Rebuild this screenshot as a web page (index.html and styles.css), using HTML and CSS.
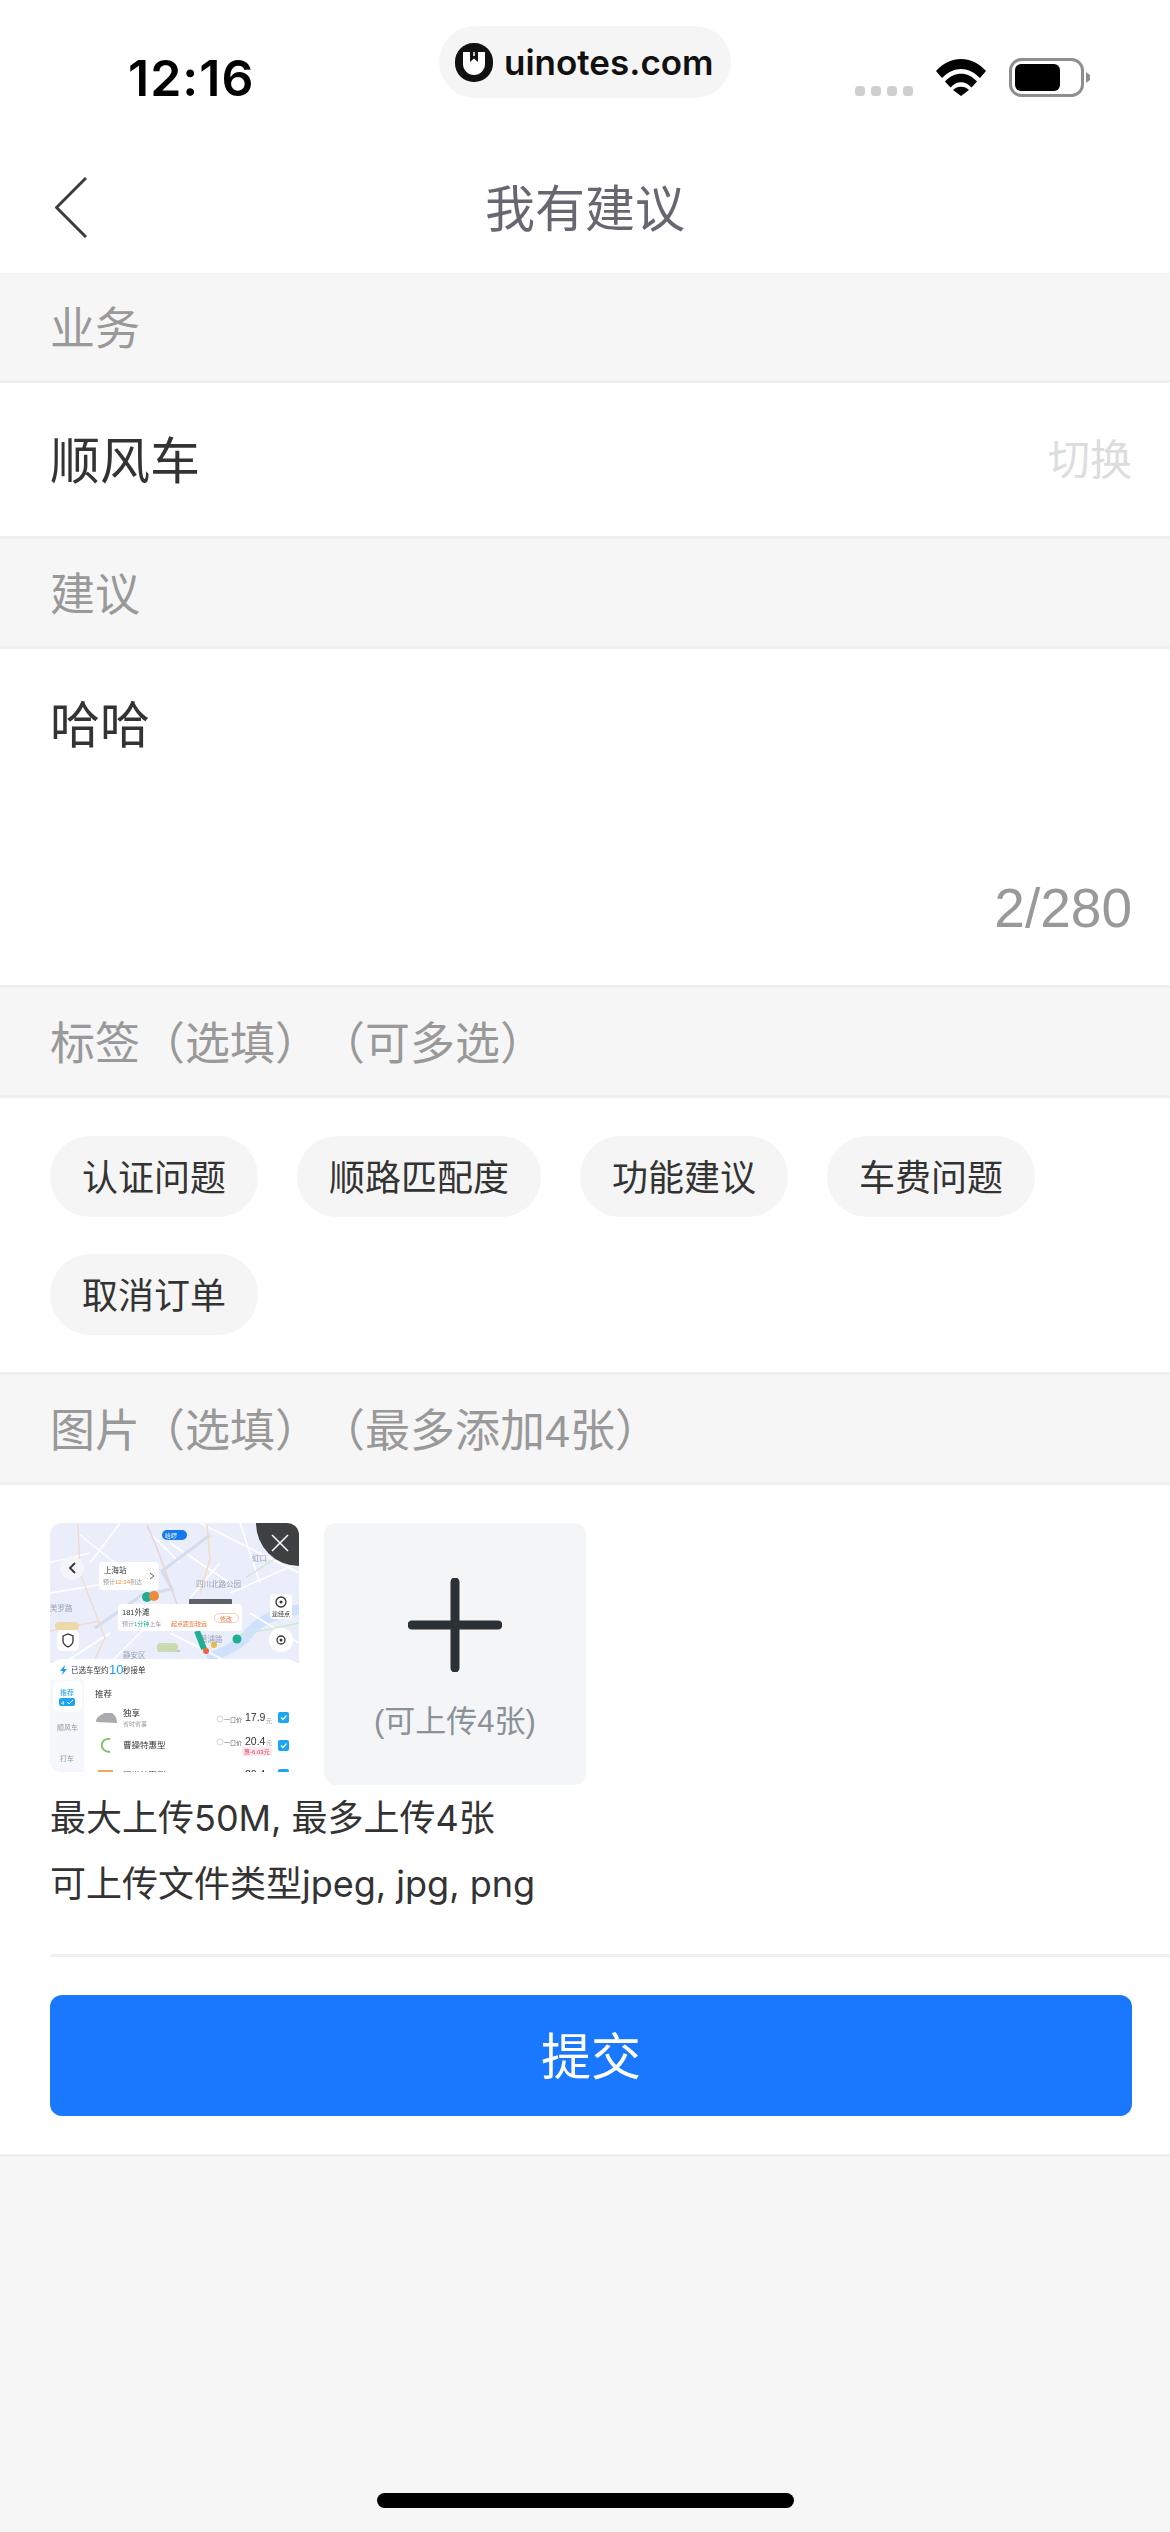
FILE: index.html
```html
<!DOCTYPE html>
<html lang="zh-CN">
<head>
    <meta charset="UTF-8">
    <meta name="viewport" content="width=device-width, initial-scale=1.0">
    <title>我有建议</title>
    <link rel="stylesheet" href="styles.css">
</head>
<body>
    <div id="page">
        <!-- Status bar -->
        <div class="status-bar">
            <span class="time">12:16</span>
            <div class="status-icons">
                <svg class="dots" width="58" height="10" viewBox="0 0 58 10">
                    <rect x="0" width="10" height="10" rx="3.5" fill="#cfcfcf"/>
                    <rect x="16" width="10" height="10" rx="3.5" fill="#cfcfcf"/>
                    <rect x="32" width="10" height="10" rx="3.5" fill="#cfcfcf"/>
                    <rect x="48" width="10" height="10" rx="3.5" fill="#cfcfcf"/>
                </svg>
                <svg class="wifi" width="50" height="37" viewBox="0 0 50 37">
                    <path d="M0 12C14-4 36-4 50 12L44 19C32 7 18 7 6 19Z"/>
                    <path d="M9 22.500C18 12 32 12 41 22.500L35.500 28.500C29 21.500 21 21.500 14.500 28.500Z"/>
                    <path d="M17 31C21 26.500 29 26.500 33 31L25 37Z"/>
                </svg>
                <svg class="battery" width="81" height="39" viewBox="0 0 81 39">
                    <rect x="1.500" y="1.500" width="72" height="36" rx="11" fill="none" stroke="#8e8e8e" stroke-width="3"/>
                    <rect x="6" y="6" width="45" height="27" rx="6"/>
                    <path d="M77 14L81 17V22L77 25Z" fill="#8e8e8e"/>
                </svg>
            </div>
            <div class="brand">
                <svg width="38" height="39" viewBox="0 0 38 39">
                    <rect width="38" height="39" rx="18.500" fill="#111"/>
                    <path d="M8 9H30V21A11 11 0 0 1 8 21Z" fill="#fff"/>
                    <path d="M15 9V19L19 15.500L23 19V9" fill="#111"/>
                    <path d="M19 9V13" stroke="#fff" stroke-width="1.500"/>
                </svg>
                <span class="brand-name">uinotes.com</span>
            </div>
        </div>

        <!-- Nav -->
        <div class="nav">
            <svg class="back" width="32" height="61" viewBox="0 0 32 61">
                <path d="M31 1L1.500 30.500L31 60" fill="none" stroke="#3d3b35" stroke-width="3"/>
            </svg>
            <h1 class="nav-title">我有建议</h1>
        </div>

        <div class="sec-head first">业务</div>
        <div class="biz-row">
            <span class="biz-name">顺风车</span>
            <span class="biz-switch">切换</span>
        </div>

        <div class="sec-head">建议</div>
        <div class="advice">
            <div class="advice-text">哈哈</div>
            <div class="advice-count">2/280</div>
        </div>

        <div class="sec-head">标签（选填）（可多选）</div>
        <div class="tags">
            <span class="tag">认证问题</span>
            <span class="tag">顺路匹配度</span>
            <span class="tag">功能建议</span>
            <span class="tag">车费问题</span>
            <span class="tag">取消订单</span>
        </div>

        <div class="sec-head">图片（选填）（最多添加4张）</div>
        <div class="upload">
            <div class="photos">
                <div class="thumb">
                    <svg class="shot" width="249" height="249" viewBox="0 0 249 249">
                        <!-- map -->
                        <rect width="249" height="140" fill="#e9eefa"/>
                        <g fill="none">
                            <path d="M252 86C222 90 205 100 195 115C185 125 170 130 158 136" stroke="#d0e2fb" stroke-width="10"/>
                            <path d="M-2 40L40 30M30 12L90 60M70 0L40 40M120 20L180 60M150 0L249 50M190 0L210 60M180 70L249 40M100 100L60 140M120 110L180 140M0 70L60 60M60 110L20 136M200 90L249 120M130 40L100 10M170 40L140 75" stroke="#fff" stroke-width="1.600"/>
                            <path d="M160 12L112 48L122 66L92 72L45 105" stroke="#d5dcec" stroke-width="3"/>
                            <path d="M97 2C108 25 112 40 116 50L128 84" stroke="#e8d3d6" stroke-width="1.600"/>
                            <path d="M157 2L160 36L150 70" stroke="#f0dcc0" stroke-width="1.600"/>
                            <path d="M28 2L30 50L55 115L45 136M0 108L50 98" stroke="#f1d9cf" stroke-width="1.300"/>
                            <path d="M195 55L249 20M190 112L249 100" stroke="#cfe6cf" stroke-width="1.300"/>
                            <path d="M108 128H130" stroke="#c2c9d6" stroke-width="2"/>
                        </g>
                        <rect x="5" y="99" width="24" height="8" rx="4" fill="#eed9a8"/>
                        <rect x="107" y="120" width="21" height="9" rx="4" fill="#c9dcb0"/>
                        <text class="m-label" x="202" y="38">虹口</text>
                        <text class="m-label" x="146" y="64">四川北路公园</text>
                        <text class="m-label" x="73" y="135">静安区</text>
                        <text class="m-label" x="0" y="88">美罗路</text>
                        <text class="m-label" x="150" y="119">黄浦路</text>

                        <rect x="112" y="7" width="25" height="10" rx="5" fill="#1479f0"/>
                        <text class="m-tiny" x="115" y="15" fill="#fff">哈啰</text>

                        <circle cx="22" cy="45" r="12" fill="#f4f5f9"/>
                        <path d="M25 40L20 45L25 50" fill="none" stroke="#333" stroke-width="1.800"/>

                        <circle cx="97" cy="74" r="5" fill="#1fae92"/>
                        <circle cx="104" cy="73" r="5" fill="#ef8b3c"/>
                        <rect x="139" y="76" width="43" height="8" rx="1" fill="#5c6068"/>

                        <rect x="49" y="39" width="60" height="28" rx="3" fill="#fff"/>
                        <text class="m-text" x="54" y="50">上海站</text>
                        <text class="m-tiny gray" x="53" y="61">预计<tspan fill="#ef8b3c">12:34</tspan>到达</text>
                        <path d="M100 50L104 53L100 56" fill="none" stroke="#666"/>

                        <path d="M147 108L154 126" stroke="#1fae92" stroke-width="6" fill="none"/>
                        <circle cx="156" cy="128" r="3" fill="#e8663c"/>
                        <circle cx="164" cy="122" r="3" fill="#e9b949"/>
                        <circle cx="187" cy="116" r="4.500" fill="#1fae92"/>

                        <rect x="68" y="81" width="124" height="27" rx="3" fill="#fff"/>
                        <text class="m-text" x="72" y="92">181外滩</text>
                        <text class="m-tiny gray" x="72" y="103">预计<tspan fill="#1fae92">1分钟</tspan>上车</text>
                        <text class="m-tiny" x="121" y="103" fill="#e8763c">起点距您较远</text>
                        <rect x="164.500" y="90.500" width="24" height="9" rx="4.500" fill="#fff" stroke="#efb898" stroke-width=".7"/>
                        <text class="m-tiny" x="170" y="98" fill="#e8763c">修改</text>

                        <rect x="220" y="71" width="22" height="25" rx="4" fill="#fff"/>
                        <circle cx="231" cy="79" r="5" fill="none" stroke="#333" stroke-width="1.300"/>
                        <circle cx="231" cy="79" r="1.500" fill="#333"/>
                        <text class="m-tiny" x="222" y="93" fill="#333">途经点</text>

                        <circle cx="231" cy="117" r="12" fill="#fff"/>
                        <circle cx="231" cy="117" r="4" fill="none" stroke="#333" stroke-width="1.300"/>
                        <circle cx="231" cy="117" r="1.500" fill="#333"/>

                        <rect x="7" y="107" width="22" height="21" rx="5" fill="#fff"/>
                        <path d="M13 113L18 111L23 113V118C23 121 20 123 18 124C16 123 13 121 13 118Z" fill="none" stroke="#333" stroke-width="1.300"/>

                        <!-- bottom sheet -->
                        <rect y="136" width="249" height="113" rx="12" fill="#fff"/>
                        <path d="M15 142L10 148H13L12 152L17 146H14Z" fill="#1a9cf0"/>
                        <text class="m-text" x="21" y="150">已选车型约</text>
                        <text class="m-ten" x="59" y="151">10</text>
                        <text class="m-text" x="73" y="150">秒接单</text>

                        <rect y="157" width="34" height="92" fill="#f4f7fb"/>
                        <rect x="3" y="158" width="29" height="31" rx="6" fill="#fff"/>
                        <text class="m-tab" x="10" y="172" fill="#1a9cf0">推荐</text>
                        <rect x="9" y="175" width="16" height="8" rx="2" fill="#1aa5f5"/>
                        <text class="m-tiny" x="11" y="182" fill="#fff">4</text>
                        <path d="M17 179L19 181L23 177" fill="none" stroke="#fff"/>
                        <text class="m-tab gray" x="7" y="207">顺风车</text>
                        <text class="m-tab gray" x="10" y="238">打车</text>

                        <text class="m-head" x="45" y="174">推荐</text>

                        <path d="M46 199C46 193 52 192 54 190H62C65 192 67 195 67 200Z" fill="#a9abae"/>
                        <text class="m-head" x="73" y="193">独享</text>
                        <text class="m-tiny gray" x="73" y="203">省时省事</text>
                        <circle cx="170" cy="196" r="3" fill="none" stroke="#bbb" stroke-width=".6"/>
                        <text class="m-tiny" x="174" y="199" fill="#666">一口价</text>
                        <text class="m-price" x="195" y="198">17.9</text>
                        <text class="m-tiny gray" x="216" y="200">元</text>
                        <rect x="228" y="189" width="11" height="11" rx="2" fill="#1aa5f5"/>
                        <path d="M231 194.500L233 196.500L236.500 192.500" fill="none" stroke="#fff" stroke-width="1.200"/>

                        <path d="M60 216C50 214 48 229 60 229" fill="none" stroke="#7cc05a" stroke-width="1.800"/>
                        <text class="m-head" x="73" y="225">曹操特惠型</text>
                        <circle cx="170" cy="219" r="3" fill="none" stroke="#bbb" stroke-width=".6"/>
                        <text class="m-tiny" x="174" y="222" fill="#666">一口价</text>
                        <text class="m-price" x="195" y="222">20.4</text>
                        <text class="m-tiny gray" x="216" y="222">元</text>
                        <rect x="192" y="224" width="30" height="9" rx="1" fill="#fdeaee"/>
                        <text class="m-tiny" x="194" y="231" fill="#e23a5e">惠-6.03元</text>
                        <rect x="228" y="217" width="11" height="11" rx="2" fill="#1aa5f5"/>
                        <path d="M231 222.500L233 224.500L236.500 220.500" fill="none" stroke="#fff" stroke-width="1.200"/>

                        <rect x="48" y="247" width="15" height="4" fill="#f2a65a"/>
                        <text class="m-head" x="73" y="255">阳光特惠型</text>
                        <text class="m-price" x="195" y="255">20.4</text>
                        <rect x="228" y="246" width="11" height="11" rx="2" fill="#1aa5f5"/>
                    </svg>
                    <div class="thumb-close">
                        <svg width="18" height="18" viewBox="0 0 18 18">
                            <path d="M1 1L17 17M17 1L1 17" stroke="#fff" stroke-width="1.500"/>
                        </svg>
                    </div>
                </div>
                <div class="add-box">
                    <svg class="add-plus" width="94" height="94" viewBox="0 0 94 94">
                        <path d="M47 4V90M4 47H90" stroke="#2b3237" stroke-width="9" stroke-linecap="round"/>
                    </svg>
                    <span class="add-text">(可上传4张)</span>
                </div>
            </div>
            <p class="note">最大上传50M, 最多上传4张</p>
            <p class="note">可上传文件类型jpeg, jpg, png</p>
            <div class="divider"></div>
            <button class="submit">提交</button>
        </div>

        <div class="home-area">
            <div class="home-bar"></div>
        </div>
    </div>
</body>
</html>
```

FILE: styles.css
```css
* {
    box-sizing: border-box;
}

body {
    margin: 0;
    padding: 0;
    font-family: "Liberation Sans", "Noto Sans CJK SC", sans-serif;
    background-color: #f6f6f6;
    color: #333;
}

#page {
    width: 1170px;
    height: 2532px;
    display: flex;
    flex-direction: column;
    overflow: hidden;
}

/* Status bar */
.status-bar {
    position: relative;
    height: 143px;
    flex: none;
    display: flex;
    justify-content: space-between;
    align-items: flex-start;
    padding: 58px 80px 0 128px;
    background-color: #fff;
}

.time {
    font-family: Inter, sans-serif;
    font-size: 50px;
    font-weight: 600;
    line-height: 40px;
    letter-spacing: 1px;
    color: #000;
}

.status-icons {
    display: flex;
    align-items: flex-end;
    gap: 23px;
    height: 39px;
}

.dots,
.wifi {
    margin-bottom: 1px;
}

.brand {
    position: absolute;
    left: 439px;
    top: 26px;
    width: 292px;
    height: 72px;
    display: flex;
    align-items: center;
    gap: 11px;
    padding-left: 16px;
    background-color: #f5f5f5;
    border-radius: 36px;
}

.brand-name {
    font-family: Inter, sans-serif;
    font-size: 35px;
    font-weight: 600;
    color: #111;
}

/* Nav */
.nav {
    position: relative;
    height: 130px;
    flex: none;
    display: flex;
    align-items: center;
    justify-content: center;
    background-color: #fff;
}

.back {
    position: absolute;
    left: 55px;
    top: 34px;
}

.nav-title {
    margin: 0 0 6px;
    font-size: 50px;
    font-weight: 400;
    color: #666770;
}

/* Sections */
.sec-head {
    height: 113px;
    flex: none;
    display: flex;
    align-items: center;
    padding: 0 50px 2px;
    font-size: 45px;
    color: #999;
    text-spacing-trim: space-all;
    background-color: #f6f6f6;
    border-top: 3px solid #efefef;
    border-bottom: 3px solid #efefef;
}

.sec-head.first {
    height: 110px;
    border-top: none;
}

.biz-row {
    height: 153px;
    flex: none;
    display: flex;
    align-items: center;
    justify-content: space-between;
    padding: 0 38px 6px 50px;
    background-color: #fff;
}

.biz-name {
    font-size: 50px;
}

.biz-switch {
    font-size: 42px;
    color: #ddd;
}

.advice {
    height: 336px;
    flex: none;
    display: flex;
    flex-direction: column;
    justify-content: space-between;
    padding: 47px 38px 47px 50px;
    background-color: #fff;
}

.advice-text {
    font-size: 50px;
    line-height: 60px;
}

.advice-count {
    font-size: 55px;
    line-height: 60px;
    text-align: right;
    color: #999;
}

/* Tags */
.tags {
    height: 274px;
    flex: none;
    display: flex;
    flex-wrap: wrap;
    align-content: flex-start;
    gap: 37px 39px;
    padding: 38px 50px 0;
    background-color: #fff;
}

.tag {
    height: 81px;
    display: flex;
    align-items: center;
    padding: 0 32px 4px;
    font-size: 36px;
    background-color: #f5f5f5;
    border-radius: 40px;
}

/* Upload */
.upload {
    flex: none;
    height: 672px;
    padding: 38px 0 0 50px;
    background-color: #fff;
    border-bottom: 3px solid #efefef;
}

.photos {
    display: flex;
    align-items: flex-start;
    gap: 25px;
}

.thumb {
    position: relative;
    width: 249px;
    height: 249px;
    border-radius: 12px;
    overflow: hidden;
}

.shot {
    display: block;
    filter: blur(0.5px);
}

.thumb-close {
    position: absolute;
    top: 0;
    right: 0;
    width: 43px;
    height: 43px;
    display: flex;
    align-items: center;
    justify-content: center;
    padding: 0 0 3px 4px;
    background-color: #3f4042;
    border-bottom-left-radius: 100%;
}

.add-box {
    width: 262px;
    height: 262px;
    display: flex;
    flex-direction: column;
    align-items: center;
    padding-top: 55px;
    background-color: #f3f5f7;
    border-radius: 12px;
}

.add-plus {
    display: block;
    filter: blur(0.5px);
}

.add-text {
    margin-top: 32px;
    font-size: 31px;
    line-height: 36px;
    color: #8a9199;
}

.note {
    margin: 0;
    font-family: Inter, "Noto Sans CJK SC", sans-serif;
    font-size: 36px;
    line-height: 66px;
}

.divider {
    height: 3px;
    margin: 37px 0 38px;
    background-color: #efefef;
}

.submit {
    display: block;
    width: 1082px;
    height: 121px;
    padding: 0 0 5px;
    font-family: inherit;
    font-size: 50px;
    color: #fff;
    background-color: #1a78ff;
    border: none;
    border-radius: 12px;
}

/* Home indicator */
.home-area {
    flex: 1;
    display: flex;
    align-items: flex-end;
    justify-content: center;
    padding-bottom: 24px;
}

.home-bar {
    width: 417px;
    height: 15px;
    background-color: #000;
    border-radius: 8px;
}

/* Texts inside the screenshot thumbnail */
.m-label {
    font-size: 7.5px;
    fill: #9aa3b5;
}

.m-text {
    font-size: 7.5px;
    fill: #333;
}

.m-tiny {
    font-size: 6px;
}

.m-tab {
    font-size: 7px;
}

.m-head {
    font-size: 8.5px;
    fill: #333;
}

.m-ten {
    font-size: 13px;
    fill: #1a9cf0;
}

.m-price {
    font-size: 10.5px;
    fill: #333;
}

.gray {
    fill: #999;
}
```
